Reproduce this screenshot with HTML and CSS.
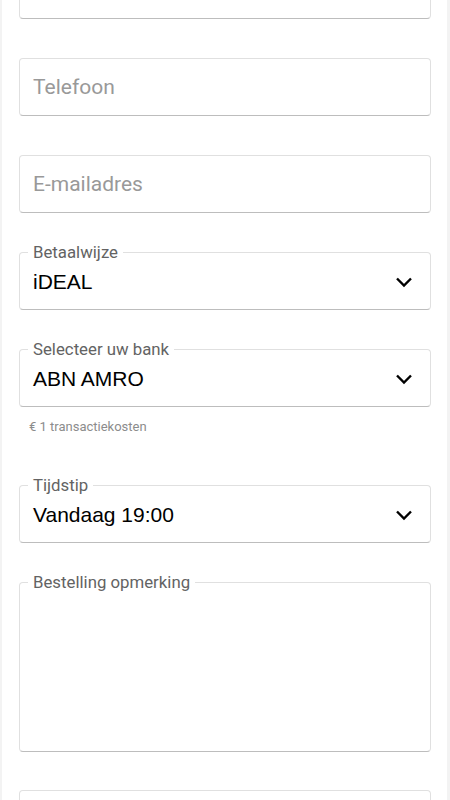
FILE: index.html
```html
<!DOCTYPE html>
<html lang="nl">
<head>
<meta charset="utf-8">
<title>Bestellen</title>
<link rel="stylesheet" href="styles.css">
</head>
<body>
<div class="page">
  <form class="form">
    <input class="field" type="text" aria-label="Adres">
    <input class="field" type="tel" placeholder="Telefoon">
    <input class="field" type="email" placeholder="E-mailadres">

    <fieldset class="outlined">
      <legend class="legend">Betaalwijze</legend>
      <div class="select-row">
        <span class="value">iDEAL</span>
        <svg class="chevron" width="18" height="12" viewBox="0 0 18 12"><polyline points="2,2.5 9,9.5 16,2.5" fill="none" stroke="#000" stroke-width="2.4"/></svg>
      </div>
    </fieldset>

    <fieldset class="outlined with-hint">
      <legend class="legend">Selecteer uw bank</legend>
      <div class="select-row">
        <span class="value">ABN AMRO</span>
        <svg class="chevron" width="18" height="12" viewBox="0 0 18 12"><polyline points="2,2.5 9,9.5 16,2.5" fill="none" stroke="#000" stroke-width="2.4"/></svg>
      </div>
    </fieldset>
    <p class="hint">€ 1 transactiekosten</p>

    <fieldset class="outlined">
      <legend class="legend">Tijdstip</legend>
      <div class="select-row">
        <span class="value">Vandaag 19:00</span>
        <svg class="chevron" width="18" height="12" viewBox="0 0 18 12"><polyline points="2,2.5 9,9.5 16,2.5" fill="none" stroke="#000" stroke-width="2.4"/></svg>
      </div>
    </fieldset>

    <fieldset class="outlined note-box">
      <legend class="legend">Bestelling opmerking</legend>
      <textarea class="note" aria-label="Bestelling opmerking"></textarea>
    </fieldset>

    <input class="field" type="text" aria-label="Kortingscode">
  </form>
</div>
</body>
</html>
```

FILE: styles.css
```css
html, body {
  margin: 0;
  padding: 0;
}

body {
  background: #f3f3f3;
  font-family: Roboto, "Liberation Sans", sans-serif;
  height: 800px;
  overflow: hidden;
}

.page {
  background: #ffffff;
  margin: 0 3px 0 2px;
  padding: 0 16px 0 17px;
  min-height: 800px;
}

.form {
  display: flex;
  flex-direction: column;
  margin-top: -39px;
}

.field {
  box-sizing: border-box;
  display: block;
  width: 100%;
  height: 58px;
  margin: 0 0 39px 0;
  padding: 0 14px 0 13px;
  border: 1px solid #e0e0e0;
  border-bottom-color: #bdbdbd;
  border-radius: 4px;
  background: #fff;
  font-family: Roboto, sans-serif;
  font-size: 21px;
  color: #000;
  outline: none;
}

.field::placeholder {
  color: #999999;
  opacity: 1;
}

.outlined {
  margin: -9px 0 39px 0;
  padding: 0;
  min-width: 0;
  border: 1px solid #e0e0e0;
  border-bottom-color: #bdbdbd;
  border-radius: 4px;
}

.outlined.with-hint {
  margin-bottom: 0;
}

.outlined.note-box {
  margin-bottom: 38px;
}

.legend {
  margin-left: 8px;
  padding: 0 5px;
  font-family: Roboto, sans-serif;
  font-size: 16.8px;
  line-height: 19px;
  color: #636363;
}

.select-row {
  display: flex;
  align-items: center;
  justify-content: space-between;
  height: 39px;
  padding: 0 17px 8px 13px;
}

.value {
  font-family: "Liberation Sans", Arial, sans-serif;
  font-size: 21px;
  color: #000;
}

.chevron {
  display: block;
  margin-top: 1px;
}

.hint {
  margin: 12px 0 50px 10px;
  font-family: Roboto, sans-serif;
  font-size: 13px;
  line-height: 16px;
  color: #8c8c8c;
}

.note {
  display: block;
  box-sizing: border-box;
  width: 100%;
  height: 159px;
  border: none;
  resize: none;
  outline: none;
  padding: 8px 13px;
  font-family: Roboto, sans-serif;
  font-size: 16px;
  background: transparent;
}
```
